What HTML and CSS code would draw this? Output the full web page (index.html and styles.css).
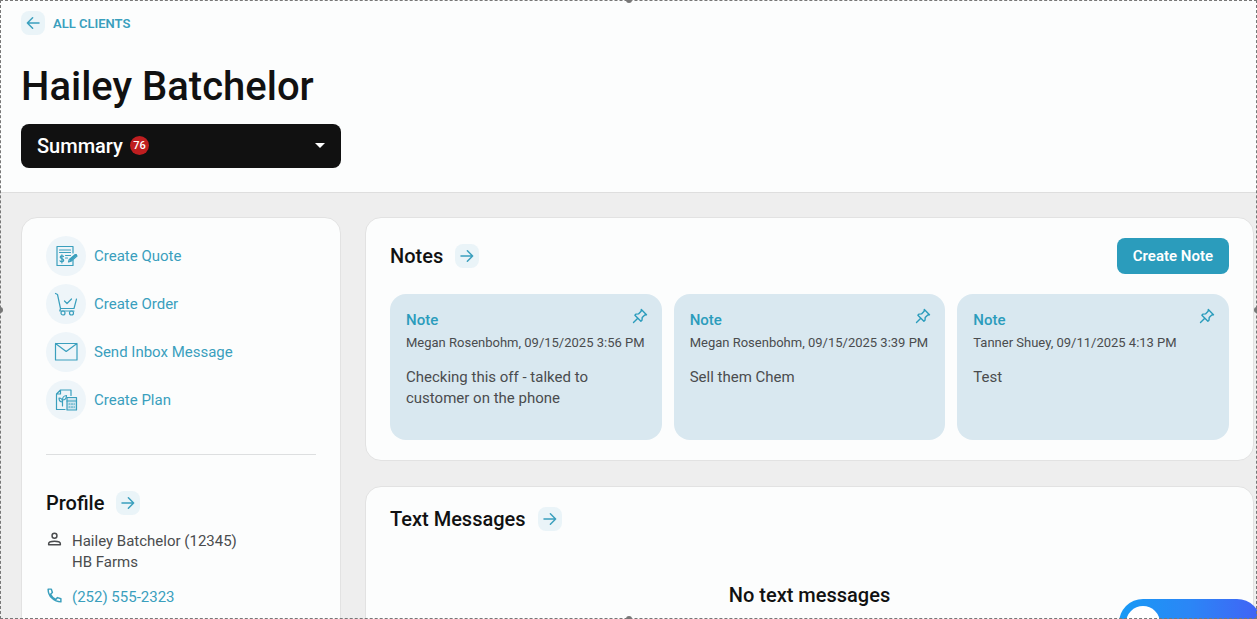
FILE: index.html
```html
<!DOCTYPE html>
<html lang="en">
<head>
  <meta charset="UTF-8" />
  <meta name="viewport" content="width=device-width, initial-scale=1.0" />
  <title>Hailey Batchelor - Clients</title>
  <link rel="stylesheet" href="styles.css">
</head>
<body>
  <!-- Shared icons -->
  <svg class="icon-defs" aria-hidden="true">
    <symbol id="arrow-right" viewBox="0 0 24 24">
      <path d="M4 12h15.500M12.500 5 19.500 12l-7 7" />
    </symbol>
    <symbol id="pin" viewBox="0 0 16 16">
      <path d="M9.300 1.500 14.500 6.700 12.800 7 10.200 9.600 10 12.300 8.900 13.200 2.900 7.200 3.800 6.100 6.500 5.900 9.100 3.300Z M5.800 10.200 1.500 14.500" />
    </symbol>
  </svg>

  <header class="page-header">
    <a href="#" class="back-link">
      <span class="arrow-box"><svg class="flip"><use href="#arrow-right" /></svg></span>
      All Clients
    </a>
    <h1>Hailey Batchelor</h1>
    <div class="section-picker">
      <select aria-label="Client section">
        <option>Summary</option>
        <option>Profile</option>
        <option>Notes</option>
      </select>
      <span class="badge">76</span>
      <span class="caret"></span>
    </div>
  </header>

  <main class="content">
    <aside class="card sidebar">
      <nav class="actions">
        <a href="#">
          <span class="action-icon">
            <svg viewBox="0 0 24 24">
              <path d="M19 9V2.500H3v19h16V16" />
              <path d="M5.500 6h11M5.500 8.500h11M11.500 11.500h5M11.500 14h2" />
              <path d="M9.500 12.500C9 11.600 6.200 11.600 6.200 13.200S9.700 14.500 9.700 16.300 6.500 18 6 16.800M7.900 10.800v8.200" />
              <path class="bold" d="m16.500 16 5.500-5" />
              <path d="m14.500 18 .8-2.500 6-5 1.700 1.500-6 5.200Z" />
            </svg>
          </span>
          Create Quote
        </a>
        <a href="#">
          <span class="action-icon">
            <svg viewBox="0 0 24 24">
              <path d="M1.500 1.500 3.500 2.500 6.500 16.500H20L22.500 7M5.500 11.500 6.500 16.500 5.800 19H20" />
              <path d="m10.500 9 2.500 2.500 4.500-4.500" />
              <circle cx="9" cy="21" r="2" />
              <circle cx="17.500" cy="21" r="2" />
            </svg>
          </span>
          Create Order
        </a>
        <a href="#">
          <span class="action-icon">
            <svg viewBox="0 0 24 24">
              <path d="M1.500 3.500h21.500v16.500H1.500ZM1.500 3.500l10.700 8L23 3.500" />
            </svg>
          </span>
          Send Inbox Message
        </a>
        <a href="#">
          <span class="action-icon">
            <svg viewBox="0 0 24 24">
              <path d="M11 21.500H2.500V6l4-4H17v5.500M2.500 6h4V2" />
              <path d="M8.500 18v-7M8.500 14C6 14 5 12 5 10c2.500 0 3.500 1.500 3.500 4ZM8.500 12c0-2.500 1.500-4.500 4-4.500 0 2.500-1.500 4.500-4 4.500Z" />
              <path class="tinted" d="M13 9.500h9.500V22H13Z" />
              <path d="M13 13h9.500M15 16h1M17.500 16h1M20 16h.5M15 19h1M17.500 19h1M20 19h.5" />
            </svg>
          </span>
          Create Plan
        </a>
      </nav>

      <section class="profile">
        <div class="section-title">
          <h2>Profile</h2>
          <a href="#" class="arrow-box" aria-label="Open profile"><svg><use href="#arrow-right" /></svg></a>
        </div>
        <div class="profile-row">
          <svg viewBox="0 0 16 16">
            <circle cx="8" cy="4.500" r="2.300" />
            <path d="M2.500 13v-1c0-1.500 3-2.300 5.500-2.300s5.500.8 5.500 2.300v1Z" />
          </svg>
          <div>Hailey Batchelor (12345)<br>HB Farms</div>
        </div>
        <div class="profile-row phone">
          <svg viewBox="0 0 16 16">
            <path d="M2 2h3l1 3.200-1.700 1.600c1 2.200 2.600 3.800 4.900 4.900l1.600-1.700L14 11v3C7.500 14 2 8.500 2 2Z" />
          </svg>
          <a href="tel:2525552323">(252) 555-2323</a>
        </div>
      </section>
    </aside>

    <div class="main-column">
      <section class="card notes">
        <div class="notes-head">
          <div class="section-title">
            <h2>Notes</h2>
            <a href="#" class="arrow-box" aria-label="Open notes"><svg><use href="#arrow-right" /></svg></a>
          </div>
          <button type="button" class="create-note">Create Note</button>
        </div>
        <div class="note-list">
          <article class="note">
            <button type="button" class="pin" aria-label="Pin note"><svg><use href="#pin" /></svg></button>
            <h3>Note</h3>
            <div class="note-meta">Megan Rosenbohm, 09/15/2025 3:56 PM</div>
            <p>Checking this off - talked to customer on the phone</p>
          </article>
          <article class="note">
            <button type="button" class="pin" aria-label="Pin note"><svg><use href="#pin" /></svg></button>
            <h3>Note</h3>
            <div class="note-meta">Megan Rosenbohm, 09/15/2025 3:39 PM</div>
            <p>Sell them Chem</p>
          </article>
          <article class="note">
            <button type="button" class="pin" aria-label="Pin note"><svg><use href="#pin" /></svg></button>
            <h3>Note</h3>
            <div class="note-meta">Tanner Shuey, 09/11/2025 4:13 PM</div>
            <p>Test</p>
          </article>
        </div>
      </section>

      <section class="card messages">
        <div class="section-title">
          <h2>Text Messages</h2>
          <a href="#" class="arrow-box" aria-label="Open text messages"><svg><use href="#arrow-right" /></svg></a>
        </div>
        <p class="empty">No text messages</p>
      </section>
    </div>
  </main>

  <button type="button" class="chat-widget" aria-label="Open chat"><span></span></button>

  <!-- Dashed capture frame with its drag handles -->
  <div class="frame">
    <i class="handle top"></i>
    <i class="handle bottom"></i>
    <i class="handle left"></i>
    <i class="handle right"></i>
  </div>
</body>
</html>
```
FILE: styles.css
```css
* { box-sizing: border-box; }
body {
  margin: 0; height: 100vh; overflow: hidden;
  font-family: Roboto, sans-serif; font-size: 15px; line-height: 21px;
  color: #4a4c4e; background: #eeeeee;
}
a { color: #3a9fbd; text-decoration: none; }
a:hover { text-decoration: underline; }
h1, h2, h3, p { margin: 0; }
h1, h2 { color: #111; font-weight: 500; }
h1 { font-size: 40px; line-height: 48px; margin-top: 28px; }
h2 { font-size: 20px; line-height: 24px; }
svg { fill: none; stroke: currentColor; stroke-linecap: round; stroke-linejoin: round; }
button { font-family: inherit; border: none; cursor: pointer; }
.icon-defs { position: absolute; width: 0; height: 0; }

/* Header */
.page-header { padding: 11px 21px 24px; background: #fcfdfd; border-bottom: 1px solid #dedede; }
.back-link {
  display: flex; align-items: center; gap: 8px;
  font-size: 13px; font-weight: 600; text-transform: uppercase;
}
.arrow-box {
  display: flex; align-items: center; justify-content: center;
  width: 24px; height: 24px; border-radius: 8px; background: #eaf4f8;
}
.arrow-box svg { width: 18px; height: 18px; stroke-width: 2; }
.arrow-box .flip { transform: scaleX(-1); }

.section-picker { position: relative; width: 320px; margin-top: 13px; }
.section-picker select {
  appearance: none; display: block; width: 100%; height: 44px; padding: 0 16px;
  font: 500 20px Roboto, sans-serif; color: #fff; background: #111;
  border: none; border-radius: 8px;
}
.badge {
  position: absolute; left: 109px; top: 12px; width: 19px; height: 19px; border-radius: 50%;
  background: #bf1e20; color: #fff; font-size: 11px; font-weight: 500; line-height: 19px; text-align: center;
  pointer-events: none;
}
.caret {
  position: absolute; right: 16px; top: 19px; pointer-events: none;
  border: 5px solid transparent; border-top-color: #fff; border-bottom: none;
}

/* Layout */
.content { display: grid; grid-template-columns: 320px minmax(0, 1fr); gap: 24px; padding: 24px 3px 0 21px; }
.main-column { display: flex; flex-direction: column; gap: 25px; }
.card { background: #fcfdfd; border: 1px solid #e2e2e2; border-radius: 16px; }

/* Sidebar */
.sidebar { padding: 14px 24px 24px; }
.actions { padding-bottom: 30px; border-bottom: 1px solid #dddfe0; }
.actions a { display: flex; align-items: center; gap: 8px; height: 48px; }
.action-icon {
  display: flex; align-items: center; justify-content: center;
  width: 40px; height: 40px; border-radius: 50%; background: #eef5f9;
}
.action-icon svg { width: 24px; height: 24px; stroke-width: 1.2; }
.action-icon .bold { stroke-width: 2; }
.action-icon .tinted { fill: #cfe6ef; }
.profile { padding-top: 36px; }
.section-title { display: flex; align-items: center; gap: 12px; }
.profile-row { display: flex; gap: 9px; margin-top: 16px; }
.profile-row svg { width: 17px; height: 17px; stroke-width: 1.4; }
.profile-row.phone { margin-top: 14px; color: #3a9fbd; }

/* Notes */
.notes { padding: 20px 24px; }
.notes-head { display: flex; justify-content: space-between; align-items: center; }
.create-note {
  height: 36px; padding: 0 16px; border-radius: 8px;
  font-size: 15px; font-weight: 600; color: #fff; background: #2b9cbc;
}
.note-list { display: grid; grid-template-columns: repeat(3, minmax(0, 1fr)); gap: 12px; margin-top: 20px; }
.note { position: relative; min-height: 146px; padding: 16px; border-radius: 16px; background: #d9e8f0; }
.note h3 { font-size: 15px; font-weight: 500; color: #2b9cbc; }
.note-meta { margin-top: 1px; font-size: 13px; white-space: nowrap; }
.note p { margin-top: 14px; }
.pin { position: absolute; right: 14px; top: 14px; width: 16px; height: 16px; padding: 0; background: none; color: #2b9cbc; }
.pin svg { display: block; width: 16px; height: 16px; stroke-width: 1.4; }

/* Text messages */
.messages { padding: 20px 24px 52px; }
.empty { margin-top: 52px; font-size: 20px; line-height: 24px; font-weight: 500; color: #111; text-align: center; }

/* Chat launcher, tucked into the bottom corner */
.chat-widget {
  position: fixed; right: -4px; bottom: -28px; width: 142px; height: 48px; padding: 7px;
  border-radius: 24px; background: linear-gradient(90deg, #179af5, #2b86f6 50%, #4262f5);
}
.chat-widget span { display: block; width: 34px; height: 34px; border-radius: 50%; background: #fff; }

.frame { position: fixed; inset: 0; border: 1px dashed #777; pointer-events: none; }
.frame .handle { position: absolute; width: 6px; height: 6px; border-radius: 50%; background: #777; }
.handle.top { left: 50%; top: -4px; margin-left: -3px; }
.handle.bottom { left: 50%; bottom: -4px; margin-left: -3px; }
.handle.left { left: -4px; top: 50%; margin-top: -3px; }
.handle.right { right: -4px; top: 50%; margin-top: -3px; }
```
